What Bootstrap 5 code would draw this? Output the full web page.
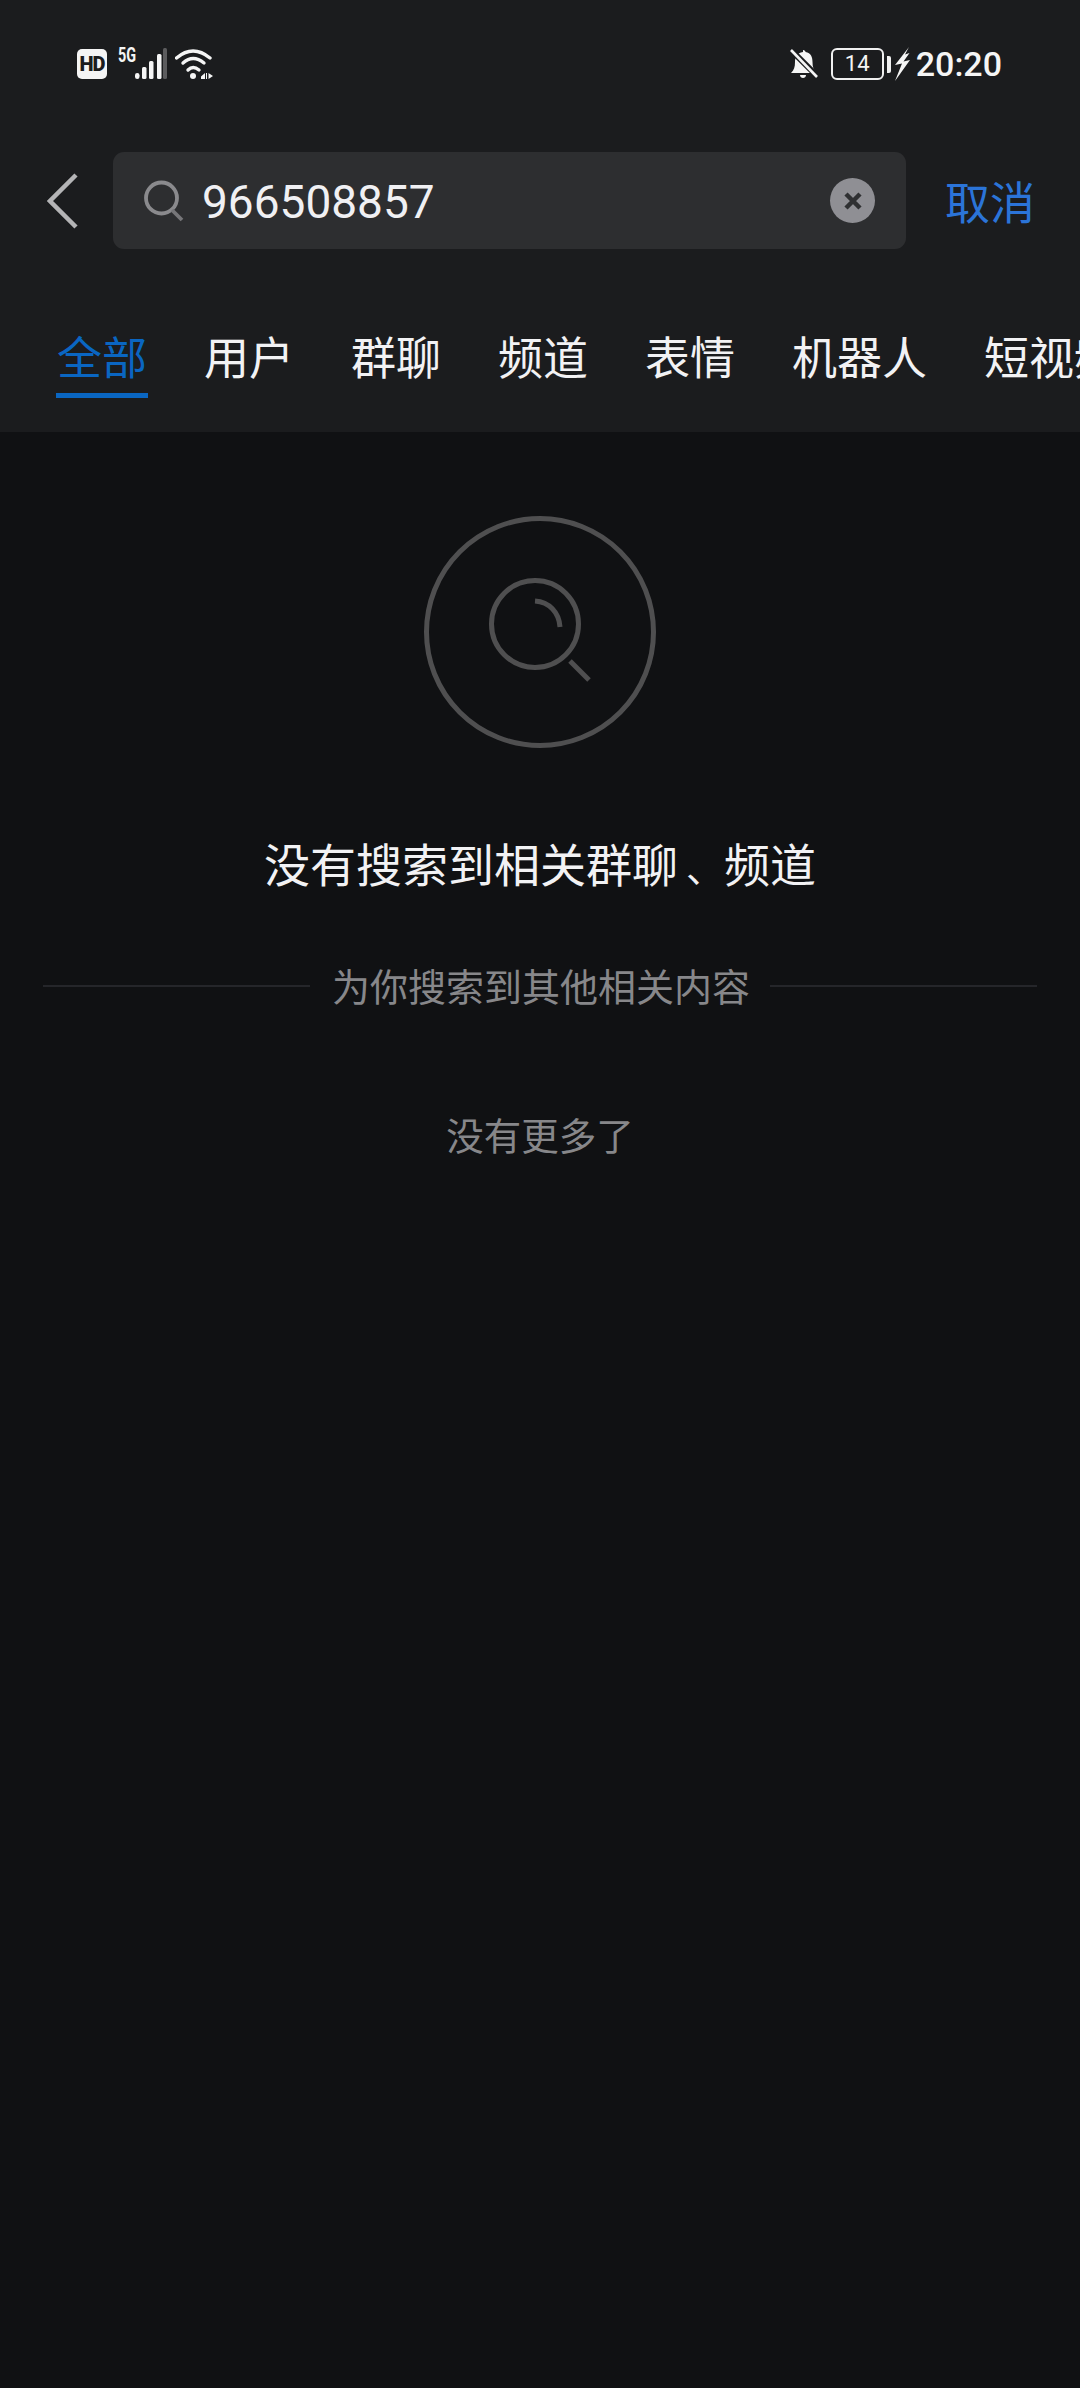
<!DOCTYPE html>
<html lang="zh-CN">
<head>
  <meta charset="UTF-8" />
  <meta name="viewport" content="width=device-width, initial-scale=1.0"/>
  <title>搜索</title>
  <link href="https://cdn.jsdelivr.net/npm/bootstrap@5.3.2/dist/css/bootstrap.min.css" rel="stylesheet">
  <style>
    body {
      background: #101113;
      font-family: "Noto Sans CJK SC", "Noto Sans", sans-serif;
      color: #f2f2f4;
      width: 1080px;
      height: 2388px;
      overflow: hidden;
    }
    .top-head { background: #1b1c1e; height: 432px; overflow: hidden; }
    .status-row { height: 128px; padding: 0 78px 0 77px; color: #f5f5f5; font-family: Roboto, sans-serif; }
    .hd-box {
      width: 30px; height: 30px; background: #f5f5f5; color: #1b1c1e; border-radius: 5px; flex: none;
      font-size: 20px; font-weight: 900; line-height: 30px; text-align: center; letter-spacing: -1px;
    }
    .net-5g {
      font-size: 20px; font-weight: 700; line-height: 16px; margin: -18px 0 0 11px; flex: none;
      transform: scaleX(.72); transform-origin: left center; width: 17px; white-space: nowrap;
    }
    .batt-box {
      width: 53px; height: 32px; border: 2.5px solid #f0f0f0; border-radius: 6px; flex: none;
      font-size: 22px; line-height: 27px; text-align: center; margin-left: 13px;
    }
    .batt-nub { width: 4px; height: 17px; background: #f0f0f0; border-radius: 0 2px 2px 0; margin-left: 3px; }
    .clock { font-size: 34px; font-weight: 500; line-height: 40px; margin-left: 6px; }
    .search-row { height: 97px; margin-top: 24px; }
    .back-slot { width: 113px; padding-left: 47px; flex: none; }
    .search-box { width: 793px; height: 97px; background: #2d2e30; border-radius: 11px; padding: 0 31px; flex: none; }
    .search-val { font-family: Roboto, sans-serif; font-size: 46px; line-height: 60px; padding-top: 2px; margin-left: 18px; color: #f0f0f3; }
    .clear-dot { width: 45px; height: 45px; border-radius: 50%; background: #8f8f94; margin-left: auto; flex: none; }
    .cancel-btn { font-size: 45px; color: #2b74d8; margin-left: 39px; line-height: 66px; white-space: nowrap; }
    .tab-row { margin-top: 74px; padding-left: 56px; gap: 55px; white-space: nowrap; }
    .tab-item {
      font-size: 45px; line-height: 66px; padding: 0 1px 4px; color: #f2f2f4;
      border-bottom: 5px solid transparent; flex: none;
    }
    .tab-item.on { color: #0a66c2; border-bottom-color: #0a66c2; }
    .empty-icon { margin-top: 84px; height: 232px; }
    .empty-title { font-size: 46px; line-height: 66px; margin-top: 81px; color: #f2f2f4; }
    .dun-mark { display: inline-block; width: 46px; padding-left: 8px; font-size: 38px; text-align: left; }
    .other-row { margin-top: 58px; padding: 0 43px; height: 56px; }
    .other-line { height: 2px; background: #25262a; flex: 1; margin-top: 1px; }
    .other-text { font-size: 38px; color: #87878a; padding: 0 20px 0 22px; line-height: 56px; }
    .no-more { font-size: 37.5px; color: #87878a; line-height: 56px; margin-top: 93px; }
  </style>
</head>
<body>
  <div class="top-head">
    <div class="status-row d-flex align-items-center">
      <div class="hd-box">HD</div>
      <div class="net-5g">5G</div>
      <svg width="32" height="32" viewBox="0 0 32 32">
        <rect x="0" y="25" width="4.500" height="6" rx="2.200" fill="#f5f5f5"/>
        <rect x="7" y="19" width="4.500" height="12" rx="1.500" fill="#f5f5f5"/>
        <rect x="14" y="13" width="4.500" height="18" rx="1.500" fill="#f5f5f5"/>
        <rect x="22" y="6" width="4.500" height="25" rx="1.500" fill="#f5f5f5"/>
        <rect x="28" y="0" width="4" height="31" rx="1.500" fill="#5c5c5e"/>
      </svg>
      <svg class="ms-2" width="38" height="32" viewBox="0 0 38 32" fill="none" stroke="#f5f5f5" stroke-width="3.400" stroke-linecap="round">
        <path d="M1.500 10Q18 -4 35 10"/>
        <path d="M8 15Q18 6 29 15"/>
        <path d="M13 22Q18 17 24 22"/>
        <circle cx="18" cy="28" r="3" fill="#f5f5f5" stroke="none"/>
        <path d="M26 28.500L30 25V31H26ZM31 25H32V31H31ZM33.500 25L38 28L33.500 31Z" fill="#f5f5f5" stroke="none"/>
      </svg>
      <svg class="ms-auto" width="28" height="30" viewBox="0 0 28 30">
        <path d="M13 1c1.500 0 2.500 1 2.500 2C21 4 22.500 8 22.500 13c0 5 1 8 4 11H1c3-3 4-6 4-11 0-5 2-9 8-10z" fill="#f5f5f5"/>
        <path d="M10 26h6c0 2-1.500 3-3 3s-3-1-3-3z" fill="#f5f5f5"/>
        <path d="M2 2L27 27" stroke="#1b1c1e" stroke-width="6"/>
        <path d="M1 1L27 28" stroke="#f5f5f5" stroke-width="2.600"/>
      </svg>
      <div class="batt-box">14</div>
      <div class="batt-nub"></div>
      <svg class="ms-1" width="15" height="34" viewBox="0 0 15 34">
        <path d="M14 0L0 18L7 16.500L0 34L15 13L8.500 14.500L14.500 6L10 7.500Z" fill="#f5f5f5"/>
      </svg>
      <div class="clock">20:20</div>
    </div>

    <div class="search-row d-flex align-items-center">
      <div class="back-slot">
        <svg class="d-block" width="32" height="56" viewBox="0 0 32 56" fill="none" stroke="#b4b4b6" stroke-width="4.500">
          <path d="M29 2L3 28L29 54"/>
        </svg>
      </div>
      <div class="search-box d-flex align-items-center">
        <svg width="40" height="42" viewBox="0 0 40 42" fill="none" stroke="#8a8a8d" stroke-width="3.800">
          <circle cx="17.500" cy="18" r="15.500"/>
          <path d="M28 30L38 40" stroke="#767679"/>
        </svg>
        <span class="search-val">966508857</span>
        <div class="clear-dot d-flex align-items-center justify-content-center">
          <svg width="18" height="18" viewBox="0 0 18 18" stroke="#2f3032" stroke-width="4.500">
            <path d="M2 2L16 16M16 2L2 16"/>
          </svg>
        </div>
      </div>
      <div class="cancel-btn">取消</div>
    </div>

    <div class="tab-row d-flex">
      <div class="tab-item on">全部</div>
      <div class="tab-item">用户</div>
      <div class="tab-item">群聊</div>
      <div class="tab-item">频道</div>
      <div class="tab-item">表情</div>
      <div class="tab-item">机器人</div>
      <div class="tab-item">短视频</div>
    </div>
  </div>

  <div class="text-center">
    <div class="empty-icon">
      <svg class="d-block mx-auto" width="232" height="232" viewBox="0 0 232 232" fill="none" stroke="#4f4f50" stroke-width="5">
        <circle cx="116" cy="116" r="113.500"/>
        <circle cx="111" cy="108" r="43.500"/>
        <path d="M111 85C125 86 135 96 136 111"/>
        <path d="M146 145L165 164"/>
      </svg>
    </div>
    <div class="empty-title">没有搜索到相关群聊<span class="dun-mark">、</span>频道</div>
    <div class="other-row d-flex align-items-center">
      <div class="other-line"></div>
      <div class="other-text">为你搜索到其他相关内容</div>
      <div class="other-line"></div>
    </div>
    <div class="no-more">没有更多了</div>
  </div>
  <script src="https://cdn.jsdelivr.net/npm/bootstrap@5.3.2/dist/js/bootstrap.bundle.min.js"></script>
</body>
</html>
